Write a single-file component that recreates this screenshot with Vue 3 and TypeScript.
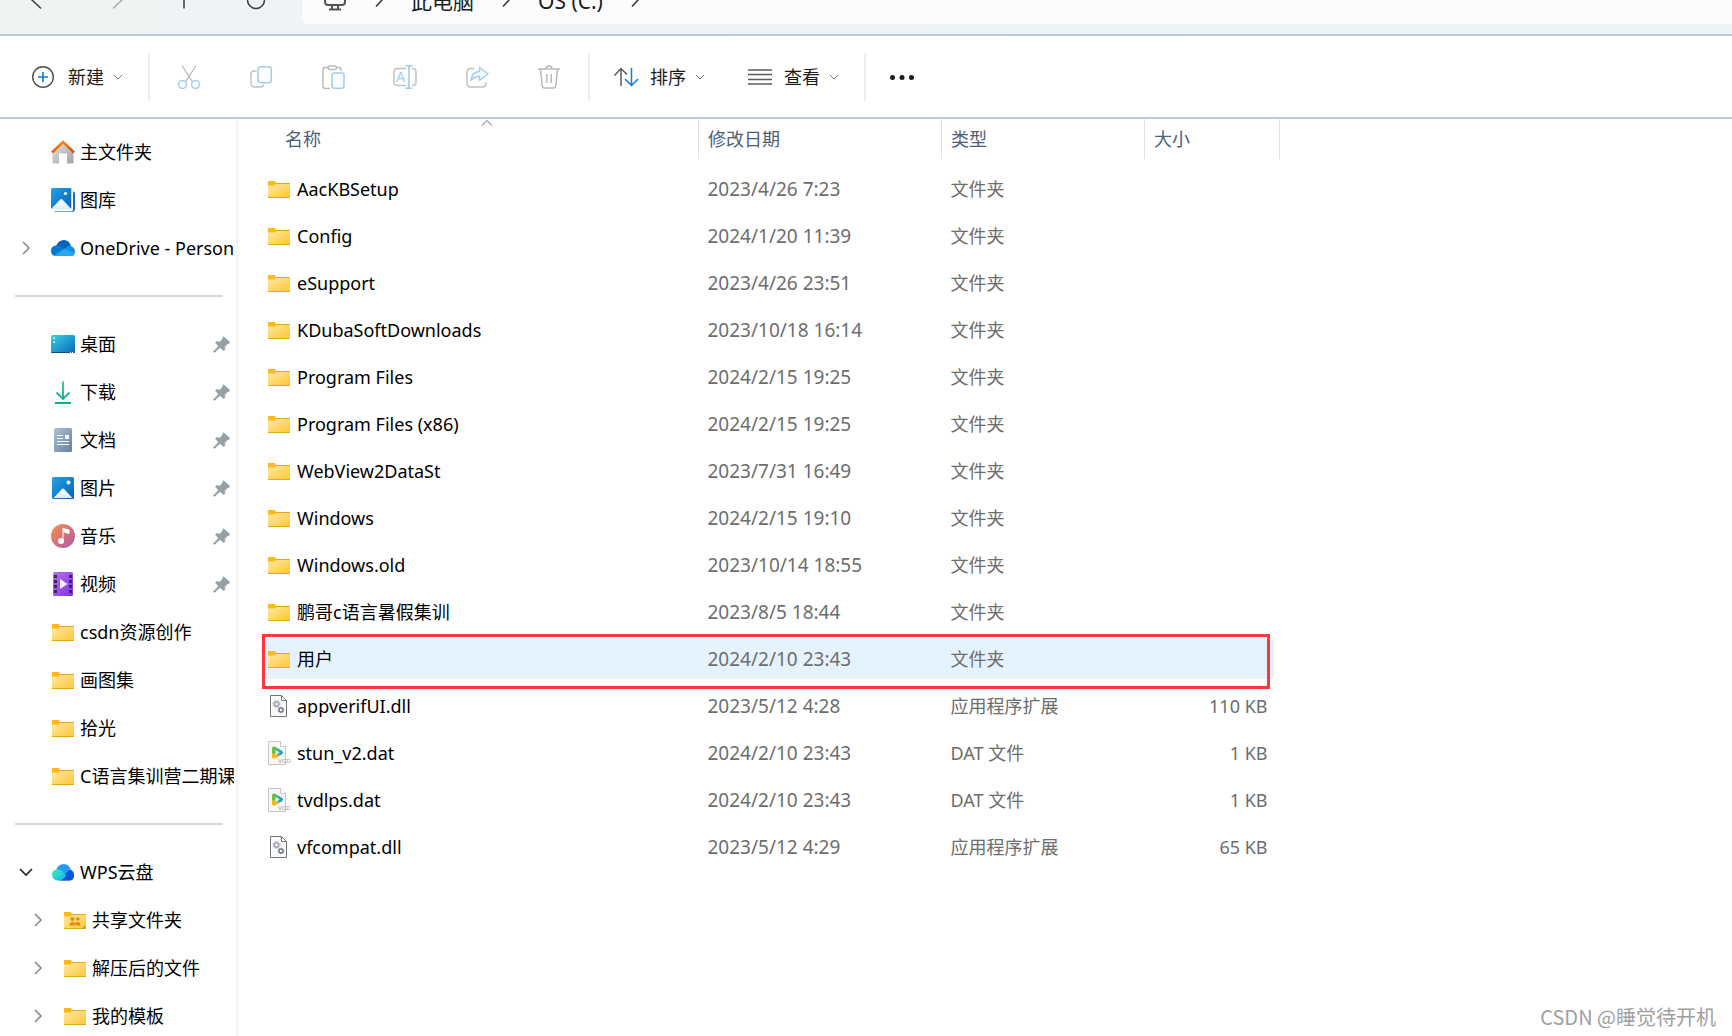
<script setup lang="ts">
interface NavItem {
  label?: string
  icon?: string
  pinned?: boolean
  chevron?: 'right' | 'down'
  nested?: boolean
  separator?: boolean
}

interface FileRow {
  name: string
  date: string
  type: string
  size?: string
  icon: string
  selected?: boolean
}

const navItems: NavItem[] = [
  { label: '主文件夹', icon: 'home' },
  { label: '图库', icon: 'gallery' },
  { label: 'OneDrive - Personal', icon: 'onedrive', chevron: 'right' },
  { separator: true },
  { label: '桌面', icon: 'desktop', pinned: true },
  { label: '下载', icon: 'download', pinned: true },
  { label: '文档', icon: 'document', pinned: true },
  { label: '图片', icon: 'picture', pinned: true },
  { label: '音乐', icon: 'music', pinned: true },
  { label: '视频', icon: 'video', pinned: true },
  { label: 'csdn资源创作', icon: 'folder' },
  { label: '画图集', icon: 'folder' },
  { label: '拾光', icon: 'folder' },
  { label: 'C语言集训营二期课', icon: 'folder' },
  { separator: true },
  { label: 'WPS云盘', icon: 'wps', chevron: 'down' },
  { label: '共享文件夹', icon: 'shared', chevron: 'right', nested: true },
  { label: '解压后的文件', icon: 'folder', chevron: 'right', nested: true },
  { label: '我的模板', icon: 'folder', chevron: 'right', nested: true },
]

const files: FileRow[] = [
  { name: 'AacKBSetup', date: '2023/4/26 7:23', type: '文件夹', icon: 'folder' },
  { name: 'Config', date: '2024/1/20 11:39', type: '文件夹', icon: 'folder' },
  { name: 'eSupport', date: '2023/4/26 23:51', type: '文件夹', icon: 'folder' },
  { name: 'KDubaSoftDownloads', date: '2023/10/18 16:14', type: '文件夹', icon: 'folder' },
  { name: 'Program Files', date: '2024/2/15 19:25', type: '文件夹', icon: 'folder' },
  { name: 'Program Files (x86)', date: '2024/2/15 19:25', type: '文件夹', icon: 'folder' },
  { name: 'WebView2DataSt', date: '2023/7/31 16:49', type: '文件夹', icon: 'folder' },
  { name: 'Windows', date: '2024/2/15 19:10', type: '文件夹', icon: 'folder' },
  { name: 'Windows.old', date: '2023/10/14 18:55', type: '文件夹', icon: 'folder' },
  { name: '鹏哥c语言暑假集训', date: '2023/8/5 18:44', type: '文件夹', icon: 'folder' },
  { name: '用户', date: '2024/2/10 23:43', type: '文件夹', icon: 'folder', selected: true },
  { name: 'appverifUI.dll', date: '2023/5/12 4:28', type: '应用程序扩展', size: '110 KB', icon: 'dll' },
  { name: 'stun_v2.dat', date: '2024/2/10 23:43', type: 'DAT 文件', size: '1 KB', icon: 'vcd' },
  { name: 'tvdlps.dat', date: '2024/2/10 23:43', type: 'DAT 文件', size: '1 KB', icon: 'vcd' },
  { name: 'vfcompat.dll', date: '2023/5/12 4:29', type: '应用程序扩展', size: '65 KB', icon: 'dll' },
]

const editActions = [
  { icon: 'cut', label: '剪切' },
  { icon: 'copy', label: '复制' },
  { icon: 'paste', label: '粘贴' },
  { icon: 'rename', label: '重命名' },
  { icon: 'share', label: '共享' },
  { icon: 'trash', label: '删除' },
]
</script>

<template>
  <div class="explorer">
    <svg class="sprite" aria-hidden="true">
      <defs>
        <linearGradient id="g-folder" x1="0" y1="0" x2="1" y2="1">
          <stop offset="0" stop-color="#ffe9a6" /><stop offset="1" stop-color="#fdc733" />
        </linearGradient>
        <linearGradient id="g-roof" x1="0" y1="0" x2="1" y2="0">
          <stop offset="0" stop-color="#e8620f" /><stop offset=".5" stop-color="#f58a1c" /><stop offset="1" stop-color="#d94a12" />
        </linearGradient>
        <linearGradient id="g-wall" x1="0" y1="0" x2="1" y2="1">
          <stop offset="0" stop-color="#e2e2e2" /><stop offset="1" stop-color="#a3a3a3" />
        </linearGradient>
        <linearGradient id="g-blue" x1="0" y1="0" x2="1" y2="1">
          <stop offset="0" stop-color="#1ea4e9" /><stop offset="1" stop-color="#0a5fb8" />
        </linearGradient>
        <linearGradient id="g-snow" x1="0" y1="0" x2="0" y2="1">
          <stop offset="0" stop-color="#ffffff" /><stop offset="1" stop-color="#d6ecfb" />
        </linearGradient>
        <linearGradient id="g-desk" x1="0" y1="0" x2="1" y2="1">
          <stop offset="0" stop-color="#35d3e6" /><stop offset="1" stop-color="#0c66b9" />
        </linearGradient>
        <linearGradient id="g-down" x1="0" y1="0" x2="0" y2="24" gradientUnits="userSpaceOnUse">
          <stop offset="0" stop-color="#38c98c" /><stop offset="1" stop-color="#10a898" />
        </linearGradient>
        <linearGradient id="g-doc" x1="0" y1="0" x2="1" y2="1">
          <stop offset="0" stop-color="#adc1d8" /><stop offset="1" stop-color="#64809f" />
        </linearGradient>
        <linearGradient id="g-music" x1="0" y1="0" x2="1" y2="1">
          <stop offset=".1" stop-color="#f08d56" /><stop offset=".6" stop-color="#cf6c82" /><stop offset="1" stop-color="#a35fb4" />
        </linearGradient>
        <linearGradient id="g-video" x1="0" y1="0" x2="1" y2="1">
          <stop offset="0" stop-color="#b572ef" /><stop offset="1" stop-color="#7d34dc" />
        </linearGradient>
        <linearGradient id="g-wps" x1="0" y1="0" x2="1" y2="1">
          <stop offset="0" stop-color="#43ecb0" /><stop offset="1" stop-color="#07b5f5" />
        </linearGradient>
        <linearGradient id="g-play" x1="0" y1="0" x2="1" y2="0">
          <stop offset="0" stop-color="#6cc62c" /><stop offset=".5" stop-color="#3fb98a" /><stop offset="1" stop-color="#1492ee" />
        </linearGradient>
      </defs>

      <symbol id="i-folder" viewBox="0 0 24 24">
        <path d="M1 4h7l1 2v4H1z" fill="#fbb91c" />
        <path d="M1 8.500h7L9.500 6H23v15H1z" fill="url(#g-folder)" />
        <path d="M9 6.500h14M1 20.500h22" stroke="#eaa61c" />
      </symbol>
      <symbol id="i-shared" viewBox="0 0 24 24">
        <path d="M1 4h7l1 2v4H1z" fill="#fbb91c" />
        <path d="M1 8.500h7L9.500 6H23v15H1z" fill="url(#g-folder)" />
        <path d="M9 6.500h14M1 20.500h22" stroke="#eaa61c" />
        <g fill="#dd8e0b">
          <circle cx="9.500" cy="11" r="2" /><circle cx="14.800" cy="11" r="1.800" />
          <path d="M6.500 17.500q0-3.500 3-3.500t3 3.500zM13 17.500q0-2-1-3 5-1.500 5.500 2v1z" /><path d="M22.500 17v3.500H19z" />
        </g>
      </symbol>
      <symbol id="i-home" viewBox="0 0 24 24">
        <path d="M12 3 22.500 13v9.500q0 1-1 1H16v-10H8v10H2.500q-1 0-1-1V13z" fill="url(#g-wall)" />
        <path d="M1 12.500 12 2l11 10.500" fill="none" stroke="url(#g-roof)" stroke-width="2.600" />
      </symbol>
      <symbol id="i-gallery" viewBox="0 0 24 24">
        <path d="M3 23q1 1 3 1h15q3 0 3-3V6q0-2-2-3v20z" fill="#1e6fb9" />
        <path d="M3 22.500h19V23q-1 1-2 1H6q-2 0-3-1z" fill="#6aa3d3" />
        <rect width="20.500" height="21" rx="1.500" fill="url(#g-blue)" />
        <path d="m.5 20.500 8.800-9q1-1 2 0l8.700 9-1 1H1z" fill="url(#g-snow)" /><circle cx="14.500" cy="5.500" r="1.600" fill="#fff" />
        <path d="M21 2v20.500H2" fill="none" stroke="#fff" />
      </symbol>
      <symbol id="i-onedrive" viewBox="0 0 24 24">
        <path d="M5 10q2.500-6 8-6 5 0 7 6l-5 6H5z" fill="#0364b8" />
        <path d="M5 9.500q2-1 4.500.5l8 5L4 20q-4-1-4-5 0-5 5-5.500z" fill="#0078d4" />
        <path d="M14 12.500q2.500-3.500 6-2.500 4 1.500 4 5.500 0 3-2.500 4.500H14z" fill="#1490df" />
        <path d="m3 19.500 11-7 9.500 5.500q-1 2-4 2H5z" fill="#28a8ea" />
      </symbol>
      <symbol id="i-desktop" viewBox="0 0 24 24">
        <rect y="3" width="24" height="18" rx="1.500" fill="url(#g-desk)" />
        <path d="M0 20h24q0 1-1 1H1q-1 0-1-1z" fill="#0b4f86" />
        <path d="M2.500 5.500h1.500v1.500h-1.500zM2.500 9.500h1.500v1.500h-1.500zM19 20h1v1h-1zM21 20h1v1h-1z" fill="#fff" />
      </symbol>
      <symbol id="i-download" viewBox="0 0 24 24">
        <path d="M12 1.500V18M5.500 12.500 12 19l6.500-6.500M4 23h16" fill="none" stroke="url(#g-down)" stroke-width="1.900" />
      </symbol>
      <symbol id="i-document" viewBox="0 0 24 24">
        <rect x="3" width="18" height="24" rx="1.500" fill="url(#g-doc)" />
        <path d="M6 7.500h6M6 10.500h6M6 13.500h12M6 16.500h12" stroke="#fff" /><path d="M14 7h4v4h-4z" fill="#fff" />
      </symbol>
      <symbol id="i-picture" viewBox="0 0 24 24">
        <rect x="1" y="1" width="22" height="22" rx="1.500" fill="url(#g-blue)" />
        <path d="m2.500 22 8.500-9q1-1 2 0l8.500 9z" fill="url(#g-snow)" /><circle cx="17.500" cy="6.500" r="2" fill="#fff" />
      </symbol>
      <symbol id="i-music" viewBox="0 0 24 24">
        <circle cx="12" cy="12" r="12" fill="url(#g-music)" />
        <circle cx="10" cy="17" r="3" fill="#fff" /><path d="M12 4.500V17M12 4.500 18 6v3.500L13 8z" fill="#fff" stroke="#fff" stroke-width="1" />
      </symbol>
      <symbol id="i-video" viewBox="0 0 24 24">
        <rect x="2" width="20" height="24" rx="1.500" fill="url(#g-video)" />
        <path d="M4.500 3v19M19.500 3v19" stroke="#40216b" stroke-width="3" stroke-dasharray="3 2" />
        <path d="M9 7v10l7.500-5z" fill="#f5efff" />
      </symbol>
      <symbol id="i-wps" viewBox="0 0 24 24">
        <path d="M5 11q1.500-7 8-7 5 0 7 6 3 1 3 5 0 5.500-5 5.500H8z" fill="#239cf8" />
        <path d="M14 15q3-5 6-5 3 2 3 5 0 5.500-5 5.500H9z" fill="#0b55d9" />
        <path d="M1 14.500Q1 9.500 6.500 9.500q4 0 6 3l2.500 3q-3 5-7 5-7 0-7-6z" fill="url(#g-wps)" />
      </symbol>
      <symbol id="i-dll" viewBox="0 0 24 24">
        <path d="M3.500 1.500h11l5 5v16h-16z" fill="#fafafa" stroke="#757575" /><path d="M14.500 1.500v5h5" fill="none" stroke="#757575" />
        <circle cx="9.500" cy="10" r="2.200" fill="none" stroke="#a3aeb9" stroke-width="1.800" />
        <circle cx="9.500" cy="10" r="3.600" fill="none" stroke="#a3aeb9" stroke-dasharray="1.400 1.430" />
        <circle cx="14" cy="16" r="2" fill="none" stroke="#6d7984" stroke-width="1.400" />
        <circle cx="14" cy="16" r="3" fill="none" stroke="#6d7984" stroke-width=".7" stroke-dasharray="1.200 1.150" />
      </symbol>
      <symbol id="i-vcd" viewBox="0 0 24 24">
        <path d="M1.500.5h12l5 5v18h-17z" fill="#f7f7f7" stroke="#c6c6c6" /><path d="M13.500.5v5h5" fill="#fff" stroke="#c6c6c6" />
        <path d="M5 8q0-3.500 3.500-2l6 3.500q3 2 0 4l-6 3.500Q5 18.500 5 15z" fill="url(#g-play)" />
        <path d="M5 12v3q0 3.500 3.500 2l4-2.300L8.500 13z" fill="#f9b619" /><path d="M8.500 9v5l4-2.500z" fill="#fff" />
        <text x="11" y="22" font-family="Liberation Sans, sans-serif" font-size="6" fill="#999">VCD</text>
      </symbol>
      <symbol id="i-pin" viewBox="0 0 18 18">
        <path d="m10.500 1.500 6 5.500-.5 1.500-2 .5-2.500 3 .5 2.500-1.500 1L7 12.500 2 17l-1 .5-.5-1L5.500 11 2.500 8l1-1.500 3.500.5L9.500 4z" fill="#959fa6" stroke="#959fa6" stroke-width=".6" stroke-linejoin="round" />
      </symbol>

      <symbol id="i-cut" viewBox="0 0 24 24">
        <path d="M5 .5 15.500 17M19 .5 8.500 17" fill="none" stroke="#b9b9b9" stroke-width="1.300" />
        <circle cx="5.500" cy="19.500" r="3.900" fill="none" stroke="#9dcdf0" stroke-width="1.500" /><circle cx="18.500" cy="19.500" r="3.900" fill="none" stroke="#9dcdf0" stroke-width="1.500" />
      </symbol>
      <symbol id="i-copy" viewBox="0 0 24 24">
        <path d="M7.500 6H5q-3 0-3 3v9q0 4 4 4h5q3 0 3.500-2.500" fill="none" stroke="#c1c1c1" stroke-width="1.400" />
        <rect x="9" y="1.700" width="13.300" height="16" rx="3" fill="#fbfdff" stroke="#9dcdf0" stroke-width="1.500" />
      </symbol>
      <symbol id="i-paste" viewBox="0 0 24 24">
        <path d="M8 2.500H4Q2 2.500 2 5v16q0 2.500 2.500 2.500H9M15 2.500h3q2 0 2 2.500v1" fill="none" stroke="#b9b9b9" stroke-width="1.400" />
        <rect x="7" y="1" width="8.500" height="3.500" rx="1.700" fill="none" stroke="#b9b9b9" stroke-width="1.300" />
        <rect x="11" y="8" width="12" height="15.300" rx="2" fill="#fbfdff" stroke="#9dcdf0" stroke-width="1.500" />
      </symbol>
      <symbol id="i-rename" viewBox="0 0 24 24">
        <path d="M13 3.500H4.500Q1 3.500 1 7v10q0 3.500 3.500 3.500H13M19 3.500h.5Q23 3.500 23 7v10q0 3.500-3.500 3.500H19" fill="none" stroke="#c1c1c1" stroke-width="1.500" />
        <path d="M12.500.8h7M16 .8v22.400M12.500 23.200h7" stroke="#9dcdf0" stroke-width="1.600" />
        <text x="3" y="17" font-family="Liberation Sans, sans-serif" font-size="14" fill="#9dcdf0">A</text>
      </symbol>
      <symbol id="i-share" viewBox="0 0 24 24">
        <path d="M9 3.500H5.500Q2 3.500 2 7v11.500Q2 22 5.500 22h12q3.500 0 3.500-3.500V17" fill="none" stroke="#c1c1c1" stroke-width="1.500" />
        <path d="M14.500 2.500 23 9l-8.500 6.500v-4q-5-.5-8.500 4 .5-8.500 8.500-9z" fill="#f4faff" stroke="#9dcdf0" stroke-width="1.500" stroke-linejoin="round" />
      </symbol>
      <symbol id="i-trash" viewBox="0 0 24 24">
        <path d="M1 4h22M3.500 4l1.800 17q.2 2 2 2h9.400q1.800 0 2-2l1.800-17M9 3.500q0-2.500 3-2.500t3 2.500M9.800 9v9M14.200 9v9" fill="none" stroke="#b9b9b9" stroke-width="1.500" />
      </symbol>
    </svg>

    <header class="topbar">
      <nav class="nav-row" aria-label="导航">
        <div class="history">
          <button type="button" aria-label="后退"><svg width="24" height="24" fill="none" stroke="#3c3c3c"><path d="m13 20.500-9-8.500 9-8.500" stroke-width="1.500" /></svg></button>
          <button type="button" aria-label="前进"><svg width="24" height="24" fill="none" stroke="#a9adae"><path d="m13 20.500 9-8.500-9-8.500" stroke-width="1.500" /></svg></button>
          <button type="button" aria-label="向上"><svg width="24" height="24" fill="none" stroke="#3c3c3c"><path d="M12 3v17.500M4 11l8-8 8 8" stroke-width="1.500" /></svg></button>
          <button type="button" aria-label="刷新"><svg width="24" height="24" fill="none" stroke="#3c3c3c"><circle cx="12" cy="12" r="8.500" stroke-width="1.500" /></svg></button>
        </div>
        <div class="address">
          <svg width="24" height="24" fill="none" stroke="#555" stroke-width="2"><rect x="2" y="3" width="20" height="14" rx="3" /><path d="M9 17v4M15 17v4M6 21.500h12" /></svg>
          <svg width="12" height="24" fill="none" stroke="#333" stroke-width="1.500"><path d="m3 18.500 6-6.500-6-6.500" /></svg>
          <a href="#">此电脑</a>
          <svg width="12" height="24" fill="none" stroke="#333" stroke-width="1.500"><path d="m3 18.500 6-6.500-6-6.500" /></svg>
          <a href="#">OS (C:)</a>
          <svg width="12" height="24" fill="none" stroke="#333" stroke-width="1.500"><path d="m3 18.500 6-6.500-6-6.500" /></svg>
        </div>
      </nav>
    </header>

    <div class="toolbar" role="toolbar" aria-label="命令">
      <button type="button" class="command new">
        <svg width="26" height="24" fill="none"><circle cx="12" cy="12" r="10.300" stroke="#4d4d4d" stroke-width="1.400" /><path d="M12 7v10M7 12h10" stroke="#0f7bd6" stroke-width="1.600" /></svg>
        <span>新建</span>
        <svg width="10" height="8" fill="none" stroke="#777"><path d="m1 2 4 4 4-4" /></svg>
      </button>
      <div class="edit-group">
        <button v-for="action in editActions" :key="action.icon" type="button" :aria-label="action.label" class="icon-button">
          <svg width="24" height="24"><use :href="`#i-${action.icon}`" /></svg>
        </button>
      </div>
      <div class="view-group">
        <button type="button" class="command">
          <svg width="26" height="24" fill="none" stroke-width="1.500"><path d="M8 21V3.500M1.500 10.500 8 3.500l6 6" stroke="#5c5c5c" /><path d="M18.500 3v17.500M12 14l6.500 6.500L25 14" stroke="#0f7bd6" /></svg>
          <span>排序</span>
          <svg width="10" height="8" fill="none" stroke="#777"><path d="m1 2 4 4 4-4" /></svg>
        </button>
        <button type="button" class="command">
          <svg width="26" height="24" stroke="#5c5c5c"><path d="M1 5h24M1 9.500h24M1 14.500h24M1 19h24" stroke-width="1.300" /></svg>
          <span>查看</span>
          <svg width="10" height="8" fill="none" stroke="#777"><path d="m1 2 4 4 4-4" /></svg>
        </button>
      </div>
      <button type="button" class="more" aria-label="更多">
        <svg width="26" height="24" fill="#1b1b1b"><circle cx="3.500" cy="12.500" r="2.500" /><circle cx="13" cy="12.500" r="2.500" /><circle cx="22.500" cy="12.500" r="2.500" /></svg>
      </button>
    </div>

    <div class="body">
      <aside class="sidebar">
        <ul>
          <template v-for="(item, i) in navItems" :key="i">
            <li v-if="item.separator" class="separator"></li>
            <li v-else :class="{ nested: item.nested }">
              <a href="#">
                <span class="expander">
                  <svg v-if="item.chevron === 'right'" width="14" height="14" fill="none" stroke="#8a8a8a" stroke-width="1.600"><path d="m4 1 6 6-6 6" /></svg>
                  <svg v-if="item.chevron === 'down'" width="14" height="14" fill="none" stroke="#222" stroke-width="1.600"><path d="m1 4 6 6 6-6" /></svg>
                </span>
                <svg width="24" height="24"><use :href="`#i-${item.icon}`" /></svg>
                <span class="label">{{ item.label }}</span>
                <svg v-if="item.pinned" class="pin" width="18" height="18"><use href="#i-pin" /></svg>
              </a>
            </li>
          </template>
        </ul>
      </aside>

      <main class="content">
        <table>
          <colgroup><col /><col class="c-date" /><col class="c-type" /><col class="c-size" /></colgroup>
          <thead>
            <tr>
              <th scope="col">名称<svg class="sort" width="12" height="8" fill="none" stroke="#666"><path d="m1 6.500 5-5 5 5" /></svg></th>
              <th scope="col">修改日期</th>
              <th scope="col">类型</th>
              <th scope="col">大小</th>
            </tr>
          </thead>
          <tbody>
            <tr v-for="file in files" :key="file.name" :class="{ selected: file.selected }">
              <td>
                <div class="cell name"><svg width="24" height="24"><use :href="`#i-${file.icon}`" /></svg>{{ file.name }}</div>
                <span v-if="file.selected" class="marker"></span>
              </td>
              <td><div class="cell date">{{ file.date }}</div></td>
              <td><div class="cell">{{ file.type }}</div></td>
              <td><div class="cell size">{{ file.size }}</div></td>
            </tr>
          </tbody>
        </table>
      </main>
    </div>
    <div class="watermark">CSDN @睡觉待开机</div>
  </div>
</template>

<style>
body {
  margin: 0;
}
</style>

<style scoped>
.explorer {
  position: relative;
  display: flex;
  flex-direction: column;
  height: 100vh;
  overflow: hidden;
  background: #fff;
  color: #000;
  font: 18px/24px "Noto Sans", "Noto Sans CJK SC", sans-serif;
}
.sprite {
  position: absolute;
  width: 0;
  height: 0;
}
svg {
  flex: none;
}
button {
  padding: 0;
  border: 0;
  background: none;
  color: inherit;
  font: inherit;
  white-space: nowrap;
}
a {
  color: inherit;
  text-decoration: none;
}

.topbar {
  flex: none;
  height: 34px;
  border-bottom: 2px solid #b9cdd2;
  background: linear-gradient(90deg, #eff3f4, #ecf4f7);
}
.nav-row {
  display: flex;
  height: 48px;
  margin-top: -24px;
}
.history {
  display: flex;
  align-items: center;
  gap: 48px;
  box-sizing: border-box;
  width: 302px;
  padding-left: 28px;
}
.history svg {
  display: block;
}
.address {
  display: flex;
  flex: 1;
  align-items: center;
  gap: 26px;
  padding-left: 21px;
  border-radius: 6px 0 0 6px;
  background: #fafcfd;
  color: #1b1b1b;
  font-size: 21px;
}
.address a {
  padding-top: 2px;
}

.toolbar {
  display: flex;
  flex: none;
  align-items: center;
  height: 81px;
  border-bottom: 2px solid #b9cdd2;
  color: #1b1b1b;
}
.command {
  display: flex;
  align-items: center;
}
.command span {
  margin: 0 9px 0 11px;
}
.command.new {
  padding: 0 25px 0 31px;
}
.edit-group,
.view-group,
.more {
  display: flex;
  align-items: center;
  height: 48px;
  border-left: 2px solid #ededed;
}
.edit-group {
  gap: 48px;
  padding: 0 27px;
}
.icon-button svg {
  display: block;
}
.view-group {
  gap: 42px;
  padding: 0 25px 0 23px;
}
.more {
  padding-left: 23px;
}

.body {
  display: flex;
  flex: 1;
  min-height: 0;
}
.sidebar {
  flex: none;
  box-sizing: border-box;
  width: 238px;
  padding-top: 9px;
  overflow: hidden;
  border-right: 2px solid #f5f5f5;
}
.sidebar ul {
  margin: 0;
  padding: 0;
  list-style: none;
}
.sidebar li {
  height: 48px;
}
.sidebar li.nested {
  padding-left: 12px;
}
.sidebar li a {
  display: flex;
  align-items: center;
  height: 48px;
  padding-right: 2px;
}
.sidebar li.separator {
  height: 2px;
  margin: 23px 13px 23px 15px;
  background: #d6d6d6;
}
.expander {
  display: flex;
  flex: none;
  width: 32px;
  padding-left: 19px;
}
.label {
  flex: 1;
  margin-left: 5px;
  overflow: hidden;
  white-space: nowrap;
}
.pin {
  margin-right: 3px;
}

.content {
  flex: 1;
  padding-left: 24px;
}
table {
  width: 1018px;
  max-width: 100%;
  table-layout: fixed;
  border-collapse: collapse;
}
.c-date {
  width: 243px;
}
.c-type {
  width: 203px;
}
.c-size {
  width: 135px;
}
th {
  position: relative;
  box-sizing: border-box;
  height: 40px;
  padding: 0 0 0 9px;
  border-right: 1px solid #e2e2e2;
  color: #4c607a;
  font-weight: 400;
  text-align: left;
}
th:first-child {
  padding-left: 23px;
}
.sort {
  position: absolute;
  top: 0;
  left: 219px;
}
tbody::before {
  display: block;
  height: 6px;
  content: "";
}
tbody tr {
  position: relative;
}
td {
  padding: 3px 0;
}
.cell {
  display: flex;
  align-items: center;
  height: 41px;
  padding-left: 9px;
  color: #6d6d6d;
  white-space: nowrap;
}
.cell.name {
  gap: 6px;
  padding-left: 5px;
  color: #000;
}
.cell.date {
  font-size: 19px;
}
.cell.size {
  justify-content: flex-end;
  margin-right: 6px;
  padding-right: 6px;
  border-radius: 0 3px 3px 0;
}
.selected .cell {
  background: #e5f3ff;
}
.marker {
  position: absolute;
  inset: -1px 10px -7px 0;
  border: 3px solid #fb3838;
}
.watermark {
  position: absolute;
  right: 16px;
  bottom: 7px;
  color: #a0a0a0;
  font: 20px/24px "Noto Sans CJK SC", sans-serif;
}
</style>
